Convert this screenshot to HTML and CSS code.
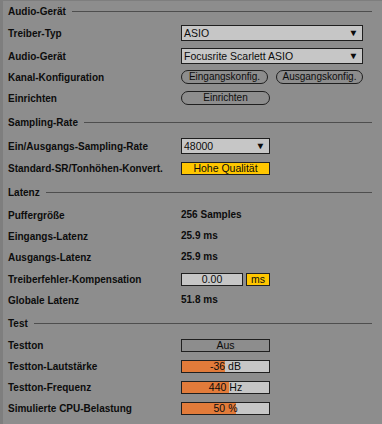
FILE: index.html
```html
<!DOCTYPE html>
<html lang="de">
<head>
  <meta charset="UTF-8">
  <title>Audio</title>
  <link rel="stylesheet" href="styles.css">
</head>
<body>
  <div class="prefs">
    <!-- Audio-Gerät -->
    <div class="section-header first"><span>Audio-Gerät</span><div class="rule"></div></div>
    <div class="row h24">
      <div class="label">Treiber-Typ</div>
      <div class="chooser wide"><span>ASIO</span><span class="tri">▼</span></div>
    </div>
    <div class="row h22">
      <div class="label">Audio-Gerät</div>
      <div class="chooser wide"><span>Focusrite Scarlett ASIO</span><span class="tri">▼</span></div>
    </div>
    <div class="row h20">
      <div class="label">Kanal-Konfiguration</div>
      <div class="btn-group">
        <div class="pill">Eingangskonfig.</div>
        <div class="pill">Ausgangskonfig.</div>
      </div>
    </div>
    <div class="row h22">
      <div class="label">Einrichten</div>
      <div class="pill std">Einrichten</div>
    </div>

    <!-- Sampling-Rate -->
    <div class="section-header"><span>Sampling-Rate</span><div class="rule"></div></div>
    <div class="row h22">
      <div class="label">Ein/Ausgangs-Sampling-Rate</div>
      <div class="chooser std"><span>48000</span><span class="tri">▼</span></div>
    </div>
    <div class="row h22">
      <div class="label">Standard-SR/Tonhöhen-Konvert.</div>
      <div class="toggle on std">Hohe Qualität</div>
    </div>

    <!-- Latenz -->
    <div class="section-header"><span>Latenz</span><div class="rule"></div></div>
    <div class="row">
      <div class="label">Puffergröße</div>
      <div class="value">256 Samples</div>
    </div>
    <div class="row">
      <div class="label">Eingangs-Latenz</div>
      <div class="value">25.9 ms</div>
    </div>
    <div class="row">
      <div class="label">Ausgangs-Latenz</div>
      <div class="value">25.9 ms</div>
    </div>
    <div class="row h22">
      <div class="label">Treiberfehler-Kompensation</div>
      <div class="btn-group tight">
        <div class="numbox">0.00</div>
        <div class="toggle on unit">ms</div>
      </div>
    </div>
    <div class="row">
      <div class="label">Globale Latenz</div>
      <div class="value">51.8 ms</div>
    </div>

    <!-- Test -->
    <div class="section-header short"><span>Test</span><div class="rule"></div></div>
    <div class="row">
      <div class="label">Testton</div>
      <div class="toggle std">Aus</div>
    </div>
    <div class="row">
      <div class="label">Testton-Lautstärke</div>
      <div class="slider"><div class="fill" style="width: 49%"></div><span>-36 dB</span></div>
    </div>
    <div class="row">
      <div class="label">Testton-Frequenz</div>
      <div class="slider"><div class="fill" style="width: 54%"></div><span>440 Hz</span></div>
    </div>
    <div class="row">
      <div class="label">Simulierte CPU-Belastung</div>
      <div class="slider"><div class="fill" style="width: 62%"></div><span>50 %</span></div>
    </div>
  </div>
</body>
</html>
```

FILE: styles.css
```css
:root {
  --bg: #8d8d8d;
  --edge: #7e7e7e;
  --rule: #4e4e4e;
  --text: #0c0c0c;
  --outline: #1f1f1f;
  --field: #c6c6c6;
  --yellow: #ffc600;
  --orange: #e27b3a;
  --font: "Liberation Sans", Arial, sans-serif;
}

* {
  margin: 0;
  padding: 0;
  box-sizing: border-box;
}

body {
  background-color: var(--bg);
  font-family: var(--font);
  color: var(--text);
  width: 382px;
  height: 424px;
  overflow: hidden;
}

.prefs {
  height: 424px;
  border-top: 1px solid var(--edge);
  border-left: 3px solid var(--edge);
  padding: 0 10px 0 5px;
  font-size: 10px;
}

.section-header {
  display: flex;
  align-items: center;
  height: 26px;
  font-weight: 700;
}

.section-header.first {
  height: 20px;
}

.section-header.short {
  height: 24px;
}

.section-header .rule {
  flex: 1;
  height: 1px;
  margin-left: 6px;
  background-color: var(--rule);
}

.row {
  display: flex;
  align-items: center;
  height: 21px;
}

.row.h20 { height: 20px; }
.row.h22 { height: 22px; }
.row.h24 { height: 24px; }

.label {
  width: 173px;
  font-weight: 700;
}

.value {
  font-weight: 700;
  margin-top: -2px;
}

.btn-group {
  display: flex;
  gap: 8px;
}

.btn-group.tight {
  gap: 3px;
}

.chooser {
  display: flex;
  justify-content: space-between;
  align-items: center;
  height: 16px;
  padding: 0 4px 0 2px;
  background-color: var(--field);
  border: 1px solid var(--outline);
  font-size: 10.5px;
}

.chooser.wide { width: 182px; }
.chooser.std { width: 89px; }

.chooser .tri {
  font-size: 9px;
  transform: scaleX(1.1);
}

.pill {
  width: 87px;
  height: 14px;
  line-height: 12px;
  border: 1px solid var(--outline);
  border-radius: 7px;
  text-align: center;
  font-size: 10px;
}

.pill.std { width: 89px; }

.toggle {
  height: 13px;
  line-height: 11px;
  border: 1px solid var(--outline);
  text-align: center;
  font-size: 10.5px;
}

.toggle.std { width: 89px; }

.toggle.on {
  background-color: var(--yellow);
}

.toggle.unit {
  width: 24px;
}

.numbox {
  width: 62px;
  height: 13px;
  line-height: 11px;
  background-color: var(--field);
  border: 1px solid var(--outline);
  text-align: center;
  font-size: 10.5px;
}

.slider {
  position: relative;
  width: 89px;
  height: 13px;
  background-color: var(--field);
  border: 1px solid var(--outline);
  font-size: 10.5px;
  text-align: center;
  line-height: 11px;
}

.slider .fill {
  position: absolute;
  left: 0;
  top: 0;
  bottom: 0;
  background-color: var(--orange);
}

.slider span {
  position: relative;
}
```
